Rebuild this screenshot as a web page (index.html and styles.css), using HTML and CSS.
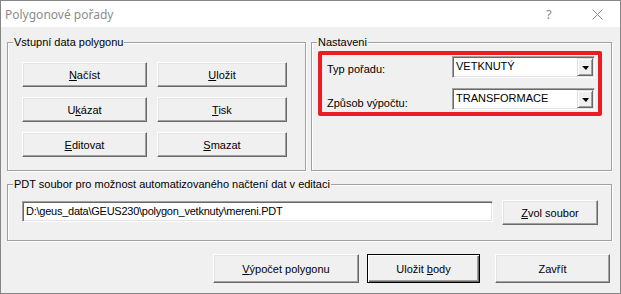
FILE: index.html
```html
<!DOCTYPE html>
<html lang="cs">
<head>
<meta charset="utf-8">
<title>Polygonové pořady</title>
<link rel="stylesheet" href="styles.css">
</head>
<body>
<div class="window">
  <div class="titlebar">
    <span class="title">Polygonové pořady</span>
    <span class="help">?</span>
    <span class="close"><svg width="11" height="11" viewBox="0 0 11 11"><path d="M0.5 0.5L10.5 10.5M10.5 0.5L0.5 10.5" stroke="#8a8a8a" stroke-width="1" fill="none"/></svg></span>
  </div>
  <div class="content">
    <div class="row-top">
      <div class="group g1">
        <span class="legend">Vstupní data polygonu</span>
        <div class="btn-grid">
          <button class="btn"><span><u>N</u>ačíst</span></button>
          <button class="btn"><span><u>U</u>ložit</span></button>
          <button class="btn"><span>U<u>k</u>ázat</span></button>
          <button class="btn"><span><u>T</u>isk</span></button>
          <button class="btn"><span><u>E</u>ditovat</span></button>
          <button class="btn"><span><u>S</u>mazat</span></button>
        </div>
      </div>
      <div class="group g2">
        <span class="legend">Nastaveni</span>
        <div class="highlight">
          <div class="field-row">
            <span class="label">Typ pořadu:</span>
            <div class="combo"><span class="combo-text">VETKNUTÝ</span><span class="drop"><span class="tri"></span></span></div>
          </div>
          <div class="field-row second">
            <span class="label">Způsob výpočtu:</span>
            <div class="combo"><span class="combo-text">TRANSFORMACE</span><span class="drop"><span class="tri"></span></span></div>
          </div>
        </div>
      </div>
    </div>
    <div class="group g3">
      <span class="legend">PDT soubor pro možnost automatizovaného načtení dat v editaci</span>
      <div class="file-row">
        <div class="textbox">D:\geus_data\GEUS230\polygon_vetknuty\mereni.PDT</div>
        <button class="btn zvol"><span><u>Z</u>vol soubor</span></button>
      </div>
    </div>
    <div class="actions">
      <button class="btn act vypocet"><span><u>V</u>ýpočet polygonu</span></button>
      <button class="btn act default"><span>Uložit <u>b</u>ody</span></button>
      <button class="btn act zavrit"><span>Zavřít</span></button>
    </div>
  </div>
</div>
</body>
</html>
```
FILE: styles.css
```css
* { box-sizing: border-box; }
html, body { margin: 0; padding: 0; background: #f0f0f0; }
body { font-family: "Liberation Sans", Arial, sans-serif; font-size: 11px; color: #000; }

.window {
  width: 621px;
  height: 294px;
  border: 1px solid #868686;
  display: flex;
  flex-direction: column;
  background: #f0f0f0;
}

.titlebar {
  height: 26px;
  background: #fff;
  display: flex;
  align-items: center;
  flex: none;
}
.title {
  font-family: "Noto Sans", "Open Sans", sans-serif;
  font-size: 12px;
  color: #8c8c8c;
  margin-left: 4px;
  flex: 1;
}
.help {
  font-family: "Noto Sans", sans-serif;
  font-size: 13px;
  color: #8c8c8c;
  width: 12px;
  margin-right: 34px;
}
.close { display: flex; width: 11px; height: 11px; margin-right: 17px; }

.content {
  flex: 1;
  display: flex;
  flex-direction: column;
  padding: 15px 7px 0 6px;
}

.row-top { display: flex; gap: 5px; height: 129px; }

.group {
  border: 1px solid #a0a0a0;
  box-shadow: inset 1px 1px 0 #fff, 1px 1px 0 #fff;
  display: flex;
  flex-direction: column;
}
.g1 { width: 299px; }
.g2 { width: 301px; }
.g3 { width: 605px; height: 57px; margin-top: 13px; }

.legend {
  align-self: flex-start;
  height: 13px;
  line-height: 13px;
  margin-top: -7px;
  margin-left: 5px;
  padding: 0 1px;
  background: #f0f0f0;
  white-space: nowrap;
}

.btn {
  font-family: "Liberation Sans", Arial, sans-serif;
  font-size: 11px;
  color: #000;
  background: #f0f0f0;
  border: 1px solid;
  border-color: #fff #696969 #696969 #fff;
  box-shadow: inset -1px -1px 0 #a0a0a0, inset 1px 1px 0 #e3e3e3;
  padding: 0;
  margin: 0;
  display: flex;
  align-items: center;
  justify-content: center;
  white-space: pre;
}
.btn u { text-decoration: underline; text-underline-offset: 1px; }

.btn-grid {
  display: grid;
  grid-template-columns: 125px 130px;
  grid-auto-rows: 25px;
  column-gap: 10px;
  row-gap: 10px;
  margin: 13px 0 0 14px;
}

.highlight {
  margin: 2px 0 0 6px;
  width: 284px;
  height: 65px;
  border: 4px solid #ec1c24;
  border-radius: 2px;
  display: flex;
  flex-direction: column;
  gap: 10px;
  padding-top: 1px;
}
.field-row { display: flex; align-items: flex-start; height: 22px; }
.label { padding-left: 5px; padding-top: 7px; line-height: 13px; }
.second .label { padding-top: 9px; }

.combo {
  margin-left: auto;
  margin-right: 3px;
  width: 143px;
  height: 22px;
  display: flex;
  align-items: stretch;
  background: #fff;
  border: 1px solid;
  border-color: #a0a0a0 #fff #fff #a0a0a0;
  box-shadow: inset 1px 1px 0 #696969, inset -1px -1px 0 #e3e3e3;
  padding: 1px;
}
.combo-text { flex: 1; padding-left: 2px; line-height: 17px; }
.drop {
  width: 16px;
  background: #f0f0f0;
  border: 1px solid;
  border-color: #e3e3e3 #696969 #696969 #e3e3e3;
  box-shadow: inset 1px 1px 0 #fff, inset -1px -1px 0 #a0a0a0;
  display: flex;
  align-items: center;
  justify-content: center;
}
.tri {
  width: 0; height: 0;
  border-left: 4px solid transparent;
  border-right: 3px solid transparent;
  border-top: 4px solid #000;
  margin-top: 1px;
}

.file-row { display: flex; align-items: flex-start; gap: 9px; margin: 10px 0 0 14px; }
.textbox {
  width: 471px;
  height: 21px;
  background: #fff;
  border: 1px solid;
  border-color: #a0a0a0 #fff #fff #a0a0a0;
  box-shadow: inset 1px 1px 0 #696969, inset -1px -1px 0 #e3e3e3;
  padding: 0 2px 0 3px;
  line-height: 18px;
  white-space: nowrap;
  letter-spacing: -0.25px;
}
.zvol { width: 96px; height: 25px; margin-top: -1px; }

.actions {
  display: flex;
  justify-content: flex-end;
  align-items: flex-start;
  margin-top: 13px;
  padding-right: 3px;
}
.act { height: 29px; }
.vypocet { width: 146px; margin-right: 8px; }
.default {
  width: 113px;
  margin-right: 15px;
  border: 1px solid #000;
  box-shadow: inset 1px 1px 0 #fff, inset -1px -1px 0 #696969, inset -2px -2px 0 #a0a0a0;
}
.zavrit { width: 115px; }
```
